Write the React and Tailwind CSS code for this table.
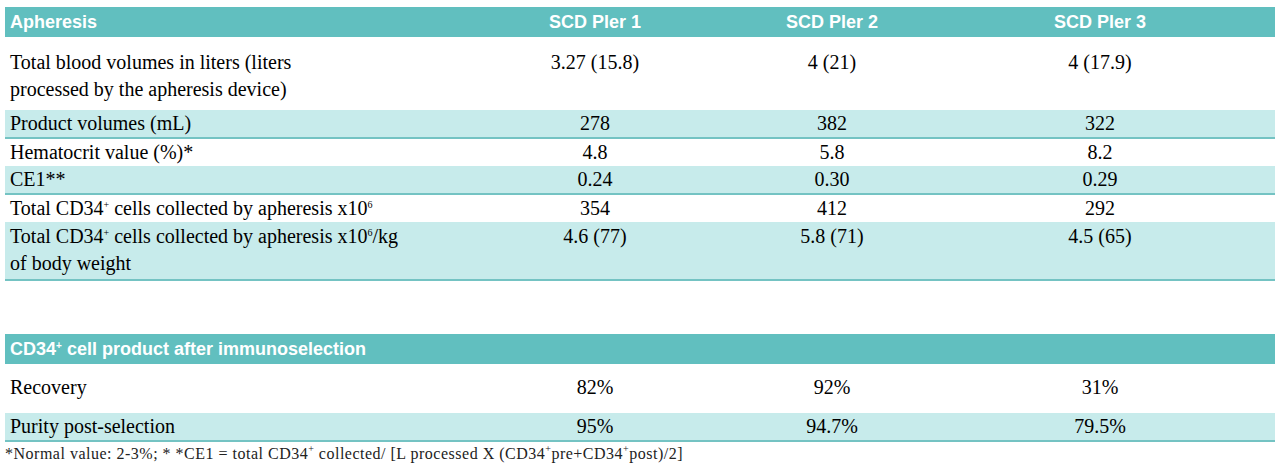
import React from 'react'

const serif = "font-['Liberation_Serif','Times_New_Roman',serif]"
const sans = "font-['Liberation_Sans',Arial,sans-serif]"
const cols = 'grid grid-cols-[445px_290px_184px_352px]'

const Sup = ({ children }) => <sup className="text-[10px] relative -top-[7px]">{children}</sup>

const rows = [
    { label: <>Total blood volumes in liters (liters<br />processed by the apheresis device)</>, v: ['3.27 (15.8)', '4 (21)', '4 (17.9)'], cls: 'pt-[12px] pb-[7px]' },
    { label: 'Product volumes (mL)', v: ['278', '382', '322'], cls: 'bg-[#c7ebeb] border-b-2 border-[#74c3c3]' },
    { label: 'Hematocrit value (%)*', v: ['4.8', '5.8', '8.2'], cls: 'leading-[26px]' },
    { label: 'CE1**', v: ['0.24', '0.30', '0.29'], cls: 'bg-[#c7ebeb] border-b-2 border-[#74c3c3] leading-[26px]' },
    { label: <>Total CD34<Sup>+</Sup> cells collected by apheresis x10<Sup>6</Sup></>, v: ['354', '412', '292'], cls: '' },
    { label: <>Total CD34<Sup>+</Sup> cells collected by apheresis x10<Sup>6</Sup>/kg<br />of body weight</>, v: ['4.6 (77)', '5.8 (71)', '4.5 (65)'], cls: 'bg-[#c7ebeb] border-b-2 border-[#74c3c3] pt-[1px] pb-[2px]' },
]

const rows2 = [
    { label: 'Recovery', v: ['82%', '92%', '31%'], cls: 'pt-[10px] pb-[12px]' },
    { label: 'Purity post-selection', v: ['95%', '94.7%', '79.5%'], cls: 'bg-[#c7ebeb] border-b-2 border-[#74c3c3] leading-[25px]' },
]

const Row = ({ row }) => (
    <div className={`${cols} ${serif} text-[20px] leading-[27px] text-black ${row.cls}`}>
        <div className="pl-[5px]">{row.label}</div>
        {row.v.map((x, i) => (
            <div key={i} className="text-center">{x}</div>
        ))}
    </div>
)

export default function App() {
    return (
        <div className="bg-white w-[1280px] h-[465px] pt-[7px] px-[5px]">
            <div className={`${cols} ${sans} bg-[#61bfbf] text-white font-bold text-[18px] leading-[30px] h-[30px]`}>
                <div className="pl-[5px]">Apheresis</div>
                <div className="text-center">SCD Pler 1</div>
                <div className="text-center">SCD Pler 2</div>
                <div className="text-center">SCD Pler 3</div>
            </div>
            {rows.map((r, i) => <Row key={i} row={r} />)}

            <div className="h-[53px]" />

            <div className={`${sans} bg-[#61bfbf] text-white font-bold text-[18px] leading-[30px] h-[30px] pl-[5px]`}>
                CD34<sup className="text-[10px] relative -top-[6px]">+</sup> cell product after immunoselection
            </div>
            {rows2.map((r, i) => <Row key={i} row={r} />)}

            <p className={`${serif} text-[16px] leading-[20px] pt-[2px] text-[#222] tracking-[0.5px]`}>
                *Normal value: 2-3%; * *CE1 = total CD34<Sup>+</Sup> collected/ [L processed X (CD34<Sup>+</Sup>pre+CD34<Sup>+</Sup>post)/2]
            </p>
        </div>
    )
}
